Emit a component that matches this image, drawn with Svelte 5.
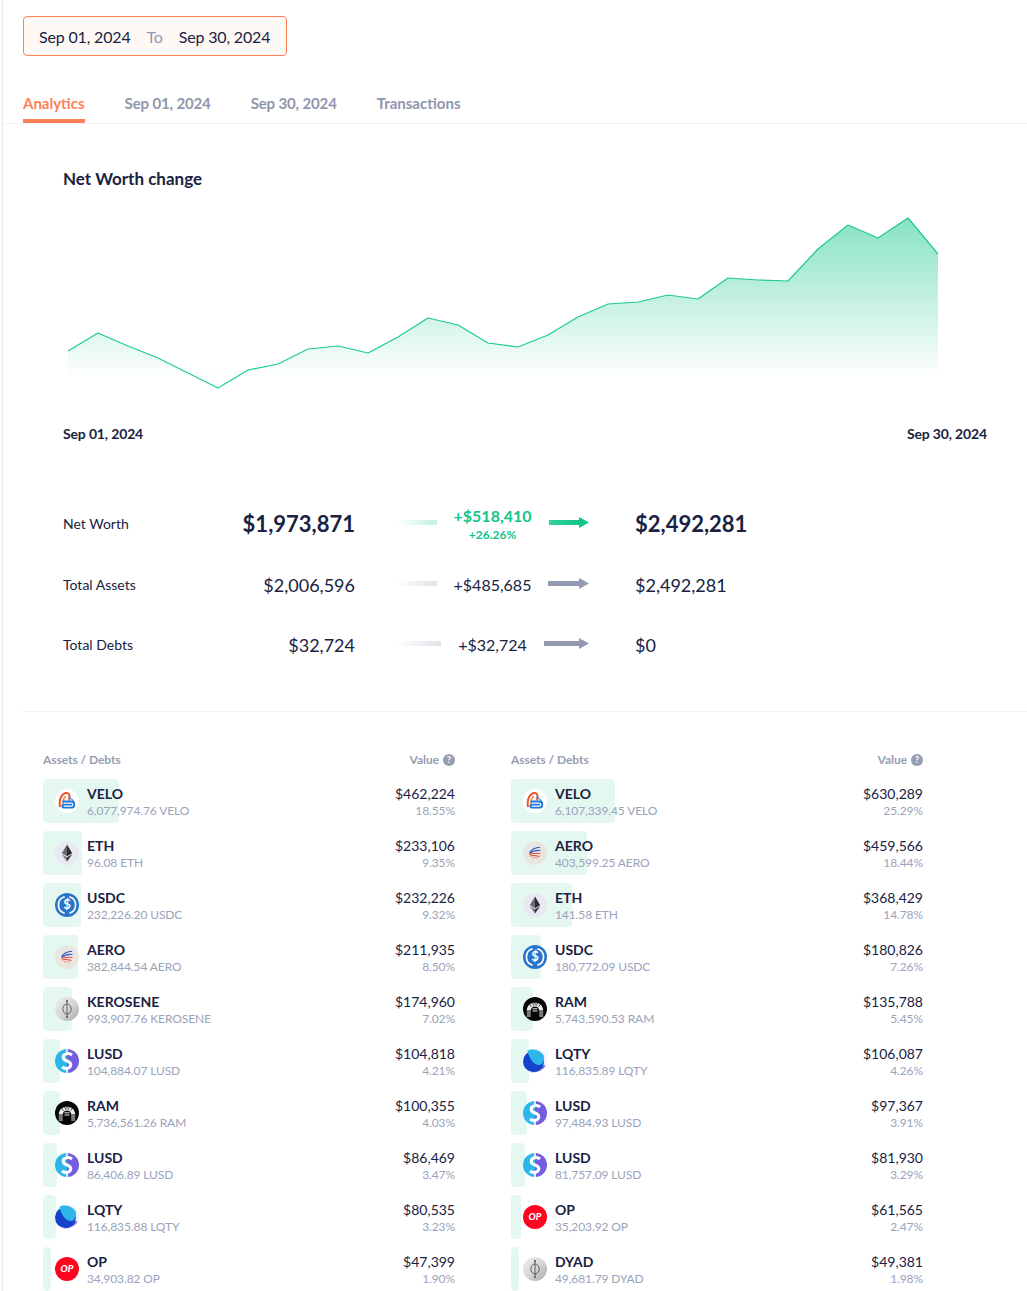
<script>
  const pts = [[68,351],[98,333],[128,346],[158,358],[188,373],[218,388],[248,370],[278,364],[308,349],[338,346],[368,353],[398,337],[428,318],[458,325],[488,343],[518,347],[548,335],[578,317],[608,304],[638,302],[668,295],[698,299],[728,278],[758,280],[788,281],[818,249],[848,225],[878,238],[908,218],[938,254]];
  const line = pts.map(p => p.join(',')).join(' ');
  const area = `68,378 ${pts.filter(p => p[1] < 378).map(p => p.join(',')).join(' ')} 938,378`;

  const summary = [
    { label: 'Net Worth', from: '$1,973,871', delta: '+$518,410', pct: '+26.26%', to: '$2,492,281', main: true },
    { label: 'Total Assets', from: '$2,006,596', delta: '+$485,685', to: '$2,492,281' },
    { label: 'Total Debts', from: '$32,724', delta: '+$32,724', to: '$0' }
  ];

  const left = [
    ['velo','VELO','6,077,974.76 VELO','$462,224','18.55'],
    ['eth','ETH','96.08 ETH','$233,106','9.35'],
    ['usdc','USDC','232,226.20 USDC','$232,226','9.32'],
    ['aero','AERO','382,844.54 AERO','$211,935','8.50'],
    ['dyad','KEROSENE','993,907.76 KEROSENE','$174,960','7.02'],
    ['lusd','LUSD','104,884.07 LUSD','$104,818','4.21'],
    ['ram','RAM','5,736,561.26 RAM','$100,355','4.03'],
    ['lusd','LUSD','86,406.89 LUSD','$86,469','3.47'],
    ['lqty','LQTY','116,835.88 LQTY','$80,535','3.23'],
    ['op','OP','34,903.82 OP','$47,399','1.90']
  ];
  const right = [
    ['velo','VELO','6,107,339.45 VELO','$630,289','25.29'],
    ['aero','AERO','403,599.25 AERO','$459,566','18.44'],
    ['eth','ETH','141.58 ETH','$368,429','14.78'],
    ['usdc','USDC','180,772.09 USDC','$180,826','7.26'],
    ['ram','RAM','5,743,590.53 RAM','$135,788','5.45'],
    ['lqty','LQTY','116,835.89 LQTY','$106,087','4.26'],
    ['lusd','LUSD','97,484.93 LUSD','$97,367','3.91'],
    ['lusd','LUSD','81,757.09 LUSD','$81,930','3.29'],
    ['op','OP','35,203.92 OP','$61,565','2.47'],
    ['dyad','DYAD','49,681.79 DYAD','$49,381','1.98']
  ];
  const tables = [left, right];
</script>

{#snippet icon(kind)}
  <svg class="icon" viewBox="0 0 24 24" aria-hidden="true">
    {#if kind === 'velo'}
      <circle cx="12" cy="12" r="12" fill="#fff"/>
      <path d="M5 18C3.500 10 7.500 3.500 12 4C15 4.500 15 8 14 11.500" fill="none" stroke="#f0542e" stroke-width="2"/>
      <path d="M8 18C7.500 13 9 7.500 11 7.500" fill="none" stroke="#f4843a" stroke-width="1.600"/>
      <path d="M13 8C16 9 18.500 11 19.300 14.500" fill="none" stroke="#3d8fe8" stroke-width="1.300"/>
      <path d="M7.500 12.500H16C20.500 12.800 20.500 18.700 16 18.700H9.500C6.500 18.700 6.500 15.600 9.500 15.600H17" fill="none" stroke="#1f7ae0" stroke-width="1.800"/>
    {:else if kind === 'eth'}
      <circle cx="12" cy="12" r="12" fill="#e8e9f2"/>
      <path d="M12 3.500L6.800 12.200L12 15.200Z" fill="#6c6c70"/>
      <path d="M12 3.500L17.200 12.200L12 15.200Z" fill="#2c2c30"/>
      <path d="M12 16.300L6.800 13.300L12 20.500Z" fill="#77777b"/>
      <path d="M12 16.300L17.200 13.300L12 20.500Z" fill="#333338"/>
    {:else if kind === 'usdc'}
      <circle cx="12" cy="12" r="12" fill="#2775ca"/>
      <path d="M9.700 3.800A8.500 8.500 0 0 0 9.700 20.200M14.300 3.800A8.500 8.500 0 0 1 14.300 20.200" fill="none" stroke="#fff" stroke-width="1.700"/>
      <text x="12" y="16.300" class="dollar">$</text>
    {:else if kind === 'aero'}
      <circle cx="12" cy="12" r="12" fill="#e9e6e2"/>
      <path d="M6.500 11.500C9 8 13 6.500 17 6.300" fill="none" stroke="#2a55c4" stroke-width="1.100"/>
      <path d="M6.500 12.500C9.500 10 13 9 17.500 9.500" fill="none" stroke="#3d5fc9" stroke-width="1.100"/>
      <path d="M6.500 13.500C10 12 14 12 17.500 12.500" fill="none" stroke="#e8523a" stroke-width="1.100"/>
      <path d="M7 15C10 14 13 14.500 16.500 15.500" fill="none" stroke="#ee4b2b" stroke-width="1.100"/>
      <path d="M9 17C11 16.300 13 16.500 15 17.300" fill="none" stroke="#f08a78" stroke-width=".8"/>
    {:else if kind === 'dyad'}
      <defs>
        <linearGradient id="dyadfill" x1="0" y1="0" x2="1" y2="1">
          <stop offset="0" stop-color="#f1f1f1"/>
          <stop offset=".55" stop-color="#d3d3d3"/>
          <stop offset="1" stop-color="#a8a8a8"/>
        </linearGradient>
      </defs>
      <circle cx="12" cy="12" r="12" fill="url(#dyadfill)"/>
      <ellipse cx="12" cy="12" rx="4.200" ry="5" fill="none" stroke="#555" stroke-width=".9"/>
      <path d="M12 4V20" stroke="#555" stroke-width=".9"/>
      <circle cx="12" cy="4" r="1" fill="#555"/>
      <circle cx="12" cy="20" r="1" fill="#555"/>
    {:else if kind === 'lusd'}
      <path d="M12 0A12 12 0 0 0 12 24Z" fill="#2eb6ea"/>
      <path d="M12 0A12 12 0 0 1 12 24Z" fill="#745ddf"/>
      <path d="M17 6C14 3.500 8.200 4.500 8.200 8.500C8.200 12.500 15.800 11.500 15.800 15.500C15.800 19.500 10 20.500 7 18" fill="none" stroke="#fff" stroke-width="3"/>
      <path d="M12 0V4M12 20V24" stroke="#fff" stroke-width="1.600"/>
    {:else if kind === 'ram'}
      <circle cx="12" cy="12" r="12" fill="#060606"/>
      <path d="M3.800 13.500C3.800 3 20.200 3 20.200 13.500H16.200C16.200 8.300 7.800 8.300 7.800 13.500Z" fill="#ececec"/>
      <path d="M6.500 7L8.500 9.800M9.500 5L10.500 8.600M14.500 5L13.500 8.600M17.500 7L15.500 9.800M12 4.500V8.300" stroke="#060606" stroke-width=".7"/>
      <path d="M3.800 15H7.800M3.800 17H7.800M3.800 19H7.800M16.200 15H20.200M16.200 17H20.200M16.200 19H20.200" stroke="#ececec" stroke-width="1.200"/>
      <path d="M9.500 11.800H14.500M9.500 14H14.500" stroke="#ececec" stroke-width="1"/>
    {:else if kind === 'lqty'}
      <circle cx="12" cy="12" r="12" fill="#eef0fb"/>
      <path d="M8 23C14 24 20 21 22.500 16.500C18 16.500 12 18 8 23Z" fill="#745ddf"/>
      <circle cx="10.500" cy="12.500" r="10.500" fill="#1542cd"/>
      <path d="M4.500 1.800C9 -1 17 .5 20.500 6C22 11 19.500 16.500 15.500 16C10 15.500 5.500 8 4.500 1.800Z" fill="#2eb6ea"/>
    {:else}
      <circle cx="12" cy="12" r="12" fill="#ff0420"/>
      <text x="12" y="15.300" class="optext">OP</text>
    {/if}
  </svg>
{/snippet}

{#snippet arrow(kind)}
  <span class="shaft-wrap {kind}">
    <span class="shaft"></span>
    <svg class="head" viewBox="0 0 10 11" aria-hidden="true"><path d="M0 0L10 5.500L0 11Z"/></svg>
  </span>
{/snippet}

<div class="page">
  <div class="datebox">
    <span>Sep 01, 2024</span>
    <span class="to">To</span>
    <span>Sep 30, 2024</span>
  </div>

  <nav class="tabs">
    <span class="tab active">Analytics</span>
    <span class="tab date">Sep 01, 2024</span>
    <span class="tab date">Sep 30, 2024</span>
    <span class="tab">Transactions</span>
  </nav>

  <section class="chart">
    <h2>Net Worth change</h2>
    <svg class="plot" viewBox="63 192 924 232" aria-hidden="true">
      <defs>
        <linearGradient id="areafill" gradientUnits="userSpaceOnUse" x1="0" y1="218" x2="0" y2="378">
          <stop offset="0" stop-color="#0fc58a" stop-opacity=".5"/>
          <stop offset="1" stop-color="#0fc58a" stop-opacity="0"/>
        </linearGradient>
      </defs>
      <polygon points={area} fill="url(#areafill)"/>
      <polyline points={line} fill="none" stroke="#1cca94" stroke-width="1.200" stroke-linejoin="round"/>
    </svg>
    <div class="dates"><span>Sep 01, 2024</span><span>Sep 30, 2024</span></div>
  </section>

  <section class="summary">
    {#each summary as row}
      <div class="srow" class:main={row.main}>
        <span class="slabel">{row.label}</span>
        <span class="sfrom">{row.from}</span>
        <div class="smid">
          <span class="fade"></span>
          <div class="delta">
            <span>{row.delta}</span>
            {#if row.pct}<small>{row.pct}</small>{/if}
          </div>
          {@render arrow(row.main ? 'green' : 'grey')}
        </div>
        <span class="sto">{row.to}</span>
      </div>
    {/each}
  </section>

  <section class="assets">
    {#each tables as table}
      <div class="table">
        <div class="thead">
          <span>Assets / Debts</span>
          <span class="vh">Value
            <svg class="help" viewBox="0 0 12 12" aria-hidden="true">
              <circle cx="6" cy="6" r="6" fill="#969db3"/>
              <text x="6" y="9.300" class="q">?</text>
            </svg>
          </span>
        </div>
        {#each table as [kind, name, amount, value, pct]}
          <div class="row">
            <span class="bar" style="width:{pct}%"></span>
            {@render icon(kind)}
            <div class="who"><b>{name}</b><small>{amount}</small></div>
            <div class="val"><span>{value}</span><small>{pct}%</small></div>
          </div>
        {/each}
      </div>
    {/each}
  </section>
</div>

<style>
  :global(body) { margin: 0; background: #fff; }
  .page {
    margin-left: 2px;
    border-left: 1px solid #e5eaf7;
    height: 1291px;
    overflow: hidden;
    box-sizing: border-box;
    padding-top: 16px;
    font-family: Lato, "Liberation Sans", sans-serif;
    color: #192242;
  }
  .datebox {
    box-sizing: border-box;
    margin-left: 20px;
    width: 264px;
    height: 40px;
    padding: 0 15px;
    display: flex;
    align-items: center;
    gap: 16px;
    border: 1px solid #ff8058;
    border-radius: 4px;
    background: #fff9f6;
    font-size: 16px;
    letter-spacing: -.17px;
  }
  .to { color: #8f9ab8; }
  .tabs {
    box-sizing: border-box;
    margin-top: 28px;
    height: 40px;
    padding-left: 20px;
    display: flex;
    gap: 40px;
    border-bottom: 1px solid #f0f2f7;
  }
  .tab {
    box-sizing: border-box;
    height: 39px;
    line-height: 38px;
    font-size: 15px;
    font-weight: 700;
    color: #8f96ad;
  }
  .tab.date { letter-spacing: -.14px; }
  .tab.active { color: #ff8058; border-bottom: 4px solid #ff8058; }
  .chart { padding: 42px 40px 0 60px; }
  h2 {
    margin: 0;
    font-size: 17px;
    line-height: 26px;
    font-weight: 700;
  }
  .plot { display: block; width: 924px; height: 232px; }
  .dates {
    display: flex;
    justify-content: space-between;
    font-size: 14px;
    line-height: 20px;
    font-weight: 700;
    letter-spacing: -.15px;
  }
  .summary { margin-top: 48px; padding-left: 60px; }
  .srow {
    display: flex;
    align-items: center;
    height: 60px;
    font-size: 18px;
  }
  .srow:nth-child(2) { margin-top: 1px; }
  .slabel { width: 130px; font-size: 14px; margin-top: 2px; }
  .sfrom { width: 162px; text-align: right; margin-top: 2px; }
  .sto { margin-top: 2px; }
  .srow:not(.main) .sfrom, .srow:not(.main) .sto { margin-top: 4px; }
  .srow.main .sfrom, .srow.main .sto { font-size: 22px; font-weight: 700; }
  .smid {
    width: 193px;
    margin: 0 46px 0 41px;
    display: flex;
    align-items: center;
  }
  .fade {
    flex: 1;
    height: 5px;
    background: linear-gradient(90deg, rgba(146,153,176,0), rgba(146,153,176,.28));
  }
  .main .fade { background: linear-gradient(90deg, rgba(15,197,138,0), rgba(15,197,138,.25)); }
  .delta {
    margin: 2px 17px 0;
    display: flex;
    flex-direction: column;
    align-items: center;
    font-size: 16px;
  }
  .main .delta { color: #0fc58a; font-weight: 700; margin-top: 3px; }
  .delta small { font-size: 12px; line-height: 13px; margin-top: 3px; }
  .shaft-wrap { flex: 1; display: flex; align-items: center; }
  .shaft { flex: 1; height: 5px; background: #9299b0; }
  .head { width: 10px; height: 11px; fill: #9299b0; }
  .green .shaft { background: linear-gradient(90deg, #35d0a0, #0fc58a); }
  .green .head { fill: #0fc58a; }
  .assets {
    box-sizing: border-box;
    margin: 38px 0 0 20px;
    border-top: 1px solid #f0f2f7;
    padding: 38px 0 0 20px;
    display: flex;
    gap: 56px;
  }
  .table { width: 412px; flex: none; }
  .thead {
    display: flex;
    justify-content: space-between;
    height: 20px;
    line-height: 20px;
    margin-bottom: 9px;
    font-size: 12px;
    font-weight: 700;
    color: #969db3;
    letter-spacing: -.05px;
  }
  .vh { display: flex; align-items: center; gap: 4px; }
  .help { width: 12px; height: 12px; }
  .q { font-size: 9.500px; font-weight: 700; fill: #fff; text-anchor: middle; }
  .row {
    position: relative;
    display: flex;
    align-items: center;
    height: 44px;
    margin-bottom: 8px;
  }
  .bar {
    position: absolute;
    left: 0;
    top: 0;
    bottom: 0;
    border-radius: 4px;
    background: #e4f8f1;
  }
  .icon { position: relative; width: 24px; height: 24px; margin: 0 8px 0 12px; flex: none; }
  .dollar { font-size: 13px; font-weight: 700; fill: #fff; text-anchor: middle; }
  .optext { font-size: 9.500px; font-weight: 900; font-style: italic; fill: #fff; text-anchor: middle; }
  .who, .val {
    position: relative;
    display: flex;
    flex-direction: column;
    margin-top: 2px;
  }
  .who { flex: 1; }
  .val { align-items: flex-end; }
  .who b { font-size: 14px; line-height: 18px; font-weight: 700; }
  .val span { font-size: 14px; line-height: 18px; }
  small { font-size: 12px; line-height: 16px; color: #9aa3bb; letter-spacing: -.1px; }
  .delta small { color: inherit; letter-spacing: 0; }
</style>
